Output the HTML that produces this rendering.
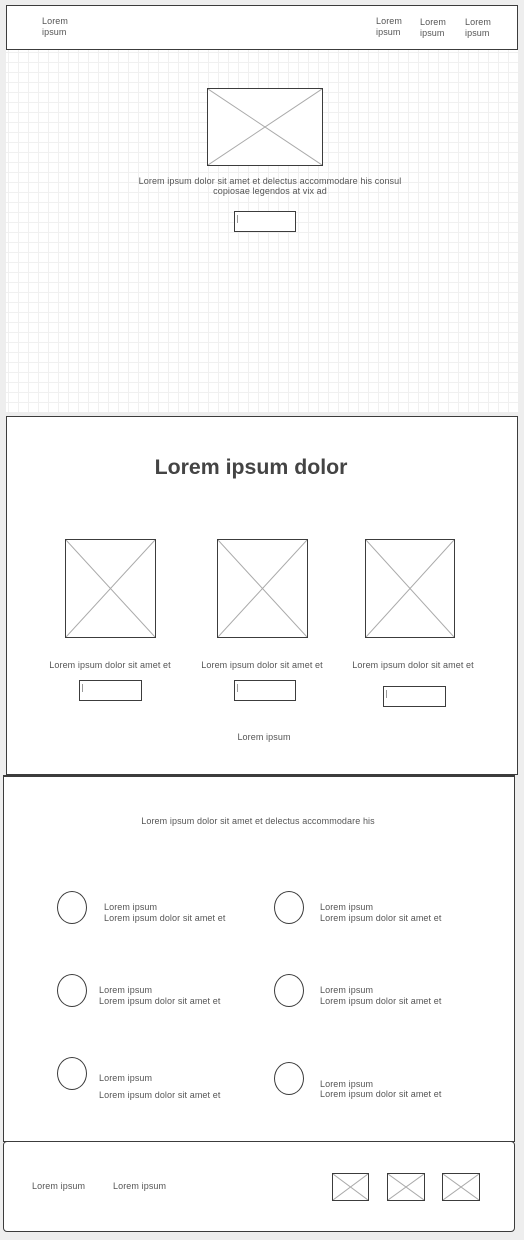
<!DOCTYPE html>
<html><head><meta charset="utf-8"><style>
body{margin:0;width:524px;height:1240px;background:#eeeeee;position:relative;overflow:hidden;font-family:"Liberation Sans",sans-serif;color:#555;font-size:9px}
.a{position:absolute}
.box{position:absolute;border:1px solid #3c3c3c;background:#fff;box-sizing:border-box}
.ph{position:absolute;border:1px solid #3c3c3c;box-sizing:border-box;background:#fff}
.ph svg{position:absolute;left:0;top:0;width:100%;height:100%}
.in{position:absolute;border:1px solid #3c3c3c;box-sizing:border-box;background:#fff}
.in:after{content:"";position:absolute;left:2px;top:3px;width:1px;height:8px;background:#999}
.c{position:absolute;width:30px;height:33px;border:1px solid #3c3c3c;border-radius:50%;box-sizing:border-box;background:#fff}
.t{position:absolute;line-height:11px;white-space:nowrap;letter-spacing:0.1px}
.ctr{text-align:center;transform:translateX(-50%)}
</style></head><body>
<div class="box" style="left:6px;top:5px;width:512px;height:45px"></div>
<div class="t" style="left:42px;top:16px">Lorem<br>ipsum</div>
<div class="t" style="left:376px;top:16px">Lorem<br>ipsum</div>
<div class="t" style="left:420px;top:17px">Lorem<br>ipsum</div>
<div class="t" style="left:465px;top:17px">Lorem<br>ipsum</div>

<div class="a" style="left:6px;top:50px;width:512px;height:362px;background-color:#fff;background-image:linear-gradient(#f0f0f0 1px,transparent 1px),linear-gradient(90deg,#f0f0f0 1px,transparent 1px);background-size:10px 10px;background-position:2px 2px"></div>
<div class="ph" style="left:207px;top:88px;width:116px;height:78px"><svg viewBox="0 0 100 100" preserveAspectRatio="none"><path d="M0 0L100 100M100 0L0 100" stroke="#aaa" stroke-width="1" vector-effect="non-scaling-stroke"/></svg></div>
<div class="t ctr" style="left:270px;top:176px;line-height:10px">Lorem ipsum dolor sit amet et delectus accommodare his consul<br>copiosae legendos at vix ad</div>
<div class="in" style="left:234px;top:211px;width:62px;height:21px"></div>

<div class="box" style="left:6px;top:416px;width:512px;height:359px"></div>
<div class="t ctr" style="left:251px;top:454px;font-size:21.3px;line-height:26px;font-weight:bold;color:#444;letter-spacing:0">Lorem ipsum dolor</div>
<div class="ph" style="left:65px;top:539px;width:91px;height:99px"><svg viewBox="0 0 100 100" preserveAspectRatio="none"><path d="M0 0L100 100M100 0L0 100" stroke="#aaa" vector-effect="non-scaling-stroke"/></svg></div>
<div class="ph" style="left:217px;top:539px;width:91px;height:99px"><svg viewBox="0 0 100 100" preserveAspectRatio="none"><path d="M0 0L100 100M100 0L0 100" stroke="#aaa" vector-effect="non-scaling-stroke"/></svg></div>
<div class="ph" style="left:365px;top:539px;width:90px;height:99px"><svg viewBox="0 0 100 100" preserveAspectRatio="none"><path d="M0 0L100 100M100 0L0 100" stroke="#aaa" vector-effect="non-scaling-stroke"/></svg></div>
<div class="t ctr" style="left:110px;top:660px">Lorem ipsum dolor sit amet et</div>
<div class="t ctr" style="left:262px;top:660px">Lorem ipsum dolor sit amet et</div>
<div class="t ctr" style="left:413px;top:660px">Lorem ipsum dolor sit amet et</div>
<div class="in" style="left:79px;top:680px;width:63px;height:21px"></div>
<div class="in" style="left:234px;top:680px;width:62px;height:21px"></div>
<div class="in" style="left:383px;top:686px;width:63px;height:21px"></div>
<div class="t ctr" style="left:264px;top:732px">Lorem ipsum</div>

<div class="box" style="left:3px;top:775px;width:512px;height:367px;border-top-width:2px"></div>
<div class="t ctr" style="left:258px;top:816px">Lorem ipsum dolor sit amet et delectus accommodare his</div>
<div class="c" style="left:57px;top:891px"></div>
<div class="c" style="left:274px;top:891px"></div>
<div class="c" style="left:57px;top:974px"></div>
<div class="c" style="left:274px;top:974px"></div>
<div class="c" style="left:57px;top:1057px"></div>
<div class="c" style="left:274px;top:1062px"></div>
<div class="t" style="left:104px;top:902px">Lorem ipsum<br>Lorem ipsum dolor sit amet et</div>
<div class="t" style="left:320px;top:902px">Lorem ipsum<br>Lorem ipsum dolor sit amet et</div>
<div class="t" style="left:99px;top:985px">Lorem ipsum<br>Lorem ipsum dolor sit amet et</div>
<div class="t" style="left:320px;top:985px">Lorem ipsum<br>Lorem ipsum dolor sit amet et</div>
<div class="t" style="left:99px;top:1073px">Lorem ipsum</div>
<div class="t" style="left:99px;top:1090px">Lorem ipsum dolor sit amet et</div>
<div class="t" style="left:320px;top:1079px;line-height:10px">Lorem ipsum<br>Lorem ipsum dolor sit amet et</div>

<div class="box" style="left:3px;top:1141px;width:512px;height:91px;border-radius:4px"></div>
<div class="t" style="left:32px;top:1181px">Lorem ipsum</div>
<div class="t" style="left:113px;top:1181px">Lorem ipsum</div>
<div class="ph" style="left:332px;top:1173px;width:37px;height:28px"><svg viewBox="0 0 100 100" preserveAspectRatio="none"><path d="M0 0L100 100M100 0L0 100" stroke="#aaa" vector-effect="non-scaling-stroke"/></svg></div>
<div class="ph" style="left:387px;top:1173px;width:38px;height:28px"><svg viewBox="0 0 100 100" preserveAspectRatio="none"><path d="M0 0L100 100M100 0L0 100" stroke="#aaa" vector-effect="non-scaling-stroke"/></svg></div>
<div class="ph" style="left:442px;top:1173px;width:38px;height:28px"><svg viewBox="0 0 100 100" preserveAspectRatio="none"><path d="M0 0L100 100M100 0L0 100" stroke="#aaa" vector-effect="non-scaling-stroke"/></svg></div>
</body></html>
